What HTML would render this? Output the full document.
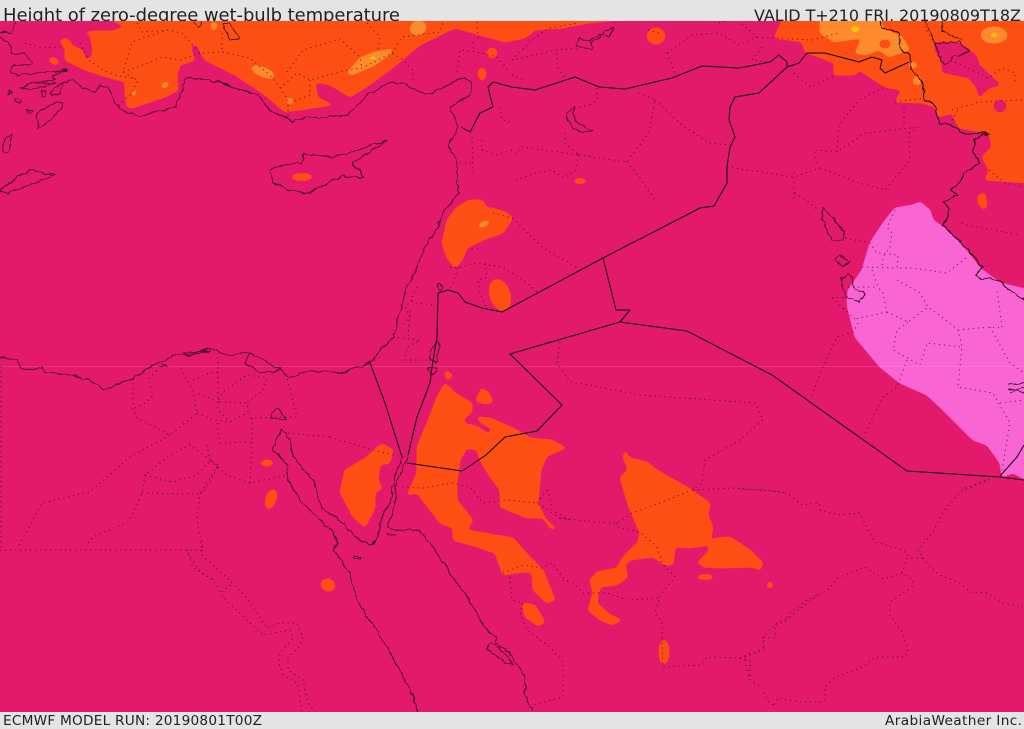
<!DOCTYPE html>
<html><head><meta charset="utf-8"><title>Height of zero-degree wet-bulb temperature</title>
<style>
html,body{margin:0;padding:0;width:1024px;height:729px;overflow:hidden;background:#e4e4e4}
svg{display:block}
text{font-family:"DejaVu Sans","Liberation Sans",sans-serif;fill:#222}
.o{fill:#fd4f14;stroke:#fd4f14;stroke-width:1;stroke-linejoin:round}
.l{fill:#fd8a2c;stroke:#fd8a2c;stroke-width:1;stroke-linejoin:round}
.m{fill:#e31a6c;stroke:#e31a6c;stroke-width:1;stroke-linejoin:round}
.c{fill:none;stroke:#1a0a14;stroke-width:.8;stroke-linejoin:round;stroke-opacity:.9}
.b{fill:none;stroke:#0c0a0c;stroke-width:1;stroke-linejoin:round}
.d{fill:none;stroke:#1c0a16;stroke-width:1;stroke-dasharray:1.2 3.8;stroke-opacity:.7}
</style></head><body>
<svg width="1024" height="729" viewBox="0 0 1024 729" xmlns="http://www.w3.org/2000/svg">
<defs>
<filter id="s" filterUnits="userSpaceOnUse" x="0" y="0" width="1024" height="729" color-interpolation-filters="sRGB">
<feGaussianBlur stdDeviation="1.8" result="b"/>
<feComponentTransfer in="b" result="a"><feFuncA type="linear" slope="6" intercept="-2.5"/></feComponentTransfer>
<feColorMatrix in="a" type="matrix" values="1 0 0 0 0 0 1 0 0 0 0 0 1 0 0 0 0 0 1 0"/>
</filter>
<filter id="w" filterUnits="userSpaceOnUse" x="0" y="0" width="1024" height="729" color-interpolation-filters="sRGB">
<feTurbulence type="fractalNoise" baseFrequency="0.14" numOctaves="2" seed="4" result="n"/>
<feDisplacementMap in="SourceGraphic" in2="n" scale="5" xChannelSelector="R" yChannelSelector="G"/>
</filter>
</defs>
<rect width="1024" height="729" fill="#e4e4e4"/>
<text x="3" y="21" font-size="18" textLength="397" lengthAdjust="spacing">Height of zero-degree wet-bulb temperature</text>
<text x="754" y="21" font-size="16" textLength="267" lengthAdjust="spacing">VALID T+210 FRI, 20190809T18Z</text>
<rect x="0" y="21" width="1024" height="691" fill="#e31a6c"/>
<text x="3" y="725" font-size="13.7" textLength="259" lengthAdjust="spacing">ECMWF MODEL RUN: 20190801T00Z</text>
<text x="885" y="725" font-size="13.7" textLength="137" lengthAdjust="spacing">ArabiaWeather Inc.</text>
<svg x="0" y="21" width="1024" height="691" viewBox="0 21 1024 691">
<g filter="url(#s)">
<path class="o" d="M113 10L113 21L126 27L112 31L92 31L85 34L90 52L86 57L90 58L93 50L89 57L84 53L80 49L72 46L71 42L65 38L60 41L63 46L65 48L65 60L85 70L110 78L125 82L125 95L127 107L133 108L165 97L178 90L177 75L180 65L195 60L193 55L190 46L197 44L200 52L205 60L235 75L265 95L285 112L333 105L318 98L315 82L330 85L350 97L365 88L390 70L420 45L440 35L455 28L480 35L505 42L525 38L535 30L562 28L589 23L612 21L612 10Z"/>
<path class="o" d="M782 10L782 21L774 38L802 42L805 52L834 63L834 75L855 75L859 70L885 87L902 90L895 102L922 103L935 107L939 117L952 113L959 128L989 133L992 147L982 157L989 170L985 180L1030 183L1030 10Z"/>
</g>
<g filter="url(#s)">
<path class="m" d="M84 34L88 33L92 50L90 58L86 58L84 50Z"/>
<path class="m" d="M935 42L960 43L969 50L977 57L979 65L990 75L1000 85L989 88L979 97L977 88L969 78L942 72L942 63L935 50Z"/>
<ellipse class="m" cx="1000" cy="106" rx="6" ry="6"/>
</g>
<g filter="url(#s)">
<path class="l" d="M820 10L820 33L834 42L862 38L855 53L865 55L879 50L889 57L902 52L910 50L902 37L882 28L882 10Z"/>
<ellipse class="l" cx="994" cy="35" rx="13" ry="8"/>
<ellipse class="l" cx="913" cy="65" rx="4" ry="3"/><ellipse class="l" cx="917" cy="81" rx="4" ry="4"/>
<ellipse class="l" cx="418" cy="28" rx="8" ry="7" transform="rotate(-25 418 28)"/>
<path class="l" d="M347 73L360 58L375 52L393 49L390 54L375 65L352 75Z"/>
<ellipse class="l" cx="263" cy="72" rx="12" ry="4.5" transform="rotate(22 263 72)"/>
<ellipse class="l" cx="165" cy="85" rx="4" ry="2.5" transform="rotate(-30 165 85)"/>
<ellipse class="l" cx="134" cy="93" rx="2" ry="3"/><ellipse class="l" cx="290" cy="101" rx="3" ry="3"/><ellipse class="l" cx="214" cy="26" rx="3" ry="4"/>
</g>
<ellipse class="o" cx="885" cy="44" rx="5" ry="4"/>
<ellipse cx="855" cy="29" rx="4" ry="3" fill="#fdc40a"/>
<ellipse cx="994" cy="35" rx="3" ry="2" fill="#fdc40a"/>
<ellipse cx="373" cy="58" rx="3" ry="1.5" fill="#fdc40a"/>
<g filter="url(#s)">
<ellipse class="o" cx="656" cy="36" rx="9" ry="8"/><ellipse class="o" cx="492" cy="53" rx="5" ry="5"/><ellipse class="o" cx="482" cy="74" rx="4" ry="6"/><ellipse class="o" cx="54" cy="61" rx="5" ry="3" transform="rotate(25 54 61)"/>
<ellipse class="o" cx="302" cy="177" rx="10" ry="3.5"/><ellipse class="o" cx="580" cy="181" rx="6" ry="2.5"/>
<path class="o" d="M978 195L985 193L987 205L984 210L978 203Z"/>
<path class="o" d="M470 200L482 200L487 208L493 208L507 213L513 218L503 233L483 240L467 248L462 260L455 268L447 258L442 243L447 220L457 207Z"/>
<ellipse class="o" cx="500" cy="295" rx="10" ry="16" transform="rotate(-18 500 295)"/>
<path class="o" d="M445 383L455 393L472 403L472 412L463 420L466 424L477 426L487 433L493 432L490 428L480 422L477 417L490 418L513 428L530 438L552 440L566 448L547 456L541 470L538 503L545 518L557 530L550 528L543 518L527 518L500 507L500 490L490 477L480 460L477 450L467 448L460 460L457 483L457 500L473 520L467 530L513 538L530 557L543 570L555 600L547 603L533 590L532 573L523 572L503 575L495 553L477 547L453 540L453 528L440 523L417 493L407 495L417 473L417 447L427 423L437 397Z"/>
<path class="o" d="M446 370L453 376L448 380L445 376Z"/><path class="o" d="M482 388L489 393L493 402L485 404L476 401L478 395Z"/>
<path class="o" d="M383 444L393 450L390 463L380 465L378 480L382 488L375 493L375 508L365 527L353 517L340 492L345 470L367 457L377 447Z"/>
<ellipse class="o" cx="267" cy="463" rx="6" ry="3"/><ellipse class="o" cx="271" cy="499" rx="5" ry="10" transform="rotate(18 271 499)"/><ellipse class="o" cx="328" cy="585" rx="7" ry="6" transform="rotate(20 328 585)"/>
<path class="o" d="M522 603L535 605L545 622L538 626L525 617Z"/>
<path class="o" d="M625 451L630 458L647 462L657 470L687 487L710 503L708 515L713 528L710 541L717 538L730 537L750 550L763 563L760 570L752 567L720 568L703 567L698 562L708 552L710 545L690 548L675 547L673 565L665 565L653 557L630 560L625 565L628 577L617 585L600 587L598 596L597 603L610 615L622 620L612 625L600 620L588 610L593 593L590 580L597 572L617 568L623 557L638 542L640 533L628 505L620 477L628 470L623 457Z"/>
<ellipse class="o" cx="705" cy="577" rx="8" ry="2.5"/><ellipse class="o" cx="770" cy="585" rx="3" ry="3"/><ellipse class="o" cx="664" cy="652" rx="5" ry="12"/>
</g>
<ellipse class="l" cx="484" cy="224" rx="5" ry="2" transform="rotate(-25 484 224)"/>
<g filter="url(#s)">
<path d="M920 202L930 210L933 220L947 230L962 245L980 268L1000 283L1030 290L1030 482L1013 473L1002 477L1000 463L987 445L973 440L940 407L927 395L900 383L880 367L855 337L847 305L848 290L862 270L870 243L883 223L895 208L913 205Z" fill="#f966d4" stroke="#f966d4" stroke-linejoin="round"/>
</g>
<rect x="0" y="366" width="1024" height="1" fill="#fff" opacity=".12"/>

<path class="d" d="M25 43L43 48L60 47M80 43L88 60L107 72L118 76L133 78L138 80L132 93L117 107M137 23L142 32L167 30M133 78L123 72L132 42L167 30L182 33L200 53L222 52L250 58L273 78L280 88L288 100L288 117M123 72L143 65L163 57L180 60L200 53M287 72L303 50L340 39L360 57L362 68M280 88L297 73L310 80L347 70L362 68L392 53L403 60L413 70L413 83M310 80L310 95L293 102M392 53L402 37L440 32L443 22M367 23L380 37L378 50M222 33L222 52M457 72L460 50L477 52L497 57L510 72M473 42L473 52M477 22L478 38M472 137L473 157L472 177M460 163L473 163M482 140L482 150L497 155L512 150M500 107L502 120L512 122"/>
<path class="d" d="M512 60L555 50L579 48M557 53L557 67L565 78M512 75L524 80M597 88L597 100L590 105L575 108M565 133L565 143L575 152L579 155L522 147L512 157M579 155L627 162L649 133L655 100L639 93M655 100L682 125L709 143L732 145M627 162L639 177L655 200M579 155L575 170L564 178L552 170L535 173L512 182M727 167L794 177L820 168M794 172L794 200M820 168L859 183L885 190L910 160L909 133L919 127L865 133L837 152L814 150L817 163M837 152L839 125L859 100L885 87M895 102L925 98M904 107L904 127M667 53L675 73M667 53L692 35L719 33L739 45L757 37L739 22M757 37L812 40L839 33M762 47L752 60L770 62M794 73L810 87L834 76M659 33L648 30M512 60L534 38L549 28L579 23M719 23L725 21M925 21L925 28L935 43L942 60M942 21L944 32L962 40M955 62L989 78L1002 68L1015 73L1015 83M952 110L979 102L1024 100M952 120L958 110M989 170L1005 183L1024 187"/>
<path class="d" d="M795 193L810 203L818 210M845 238L870 243L877 253L898 255L897 268L913 268L947 273L967 257M895 210L887 227L892 233L890 247L883 257L882 267M862 267L897 268M872 270L878 287L883 293L887 312L855 319M848 287L878 287M897 280L920 293L928 307L943 318L958 330L962 347L958 387L993 393L1010 423L1002 470M887 312L908 322L928 307M958 330L990 327L1002 328L997 290M990 327L1010 363L1024 373M908 322L897 330L893 350L920 365L927 343L962 347M907 360L897 387L883 397L865 433M858 323L853 332L837 337L823 367L810 400M832 298L848 297M832 298L855 319M1000 403L1024 400M962 223L967 225L1020 235M965 488L993 478"/>
<path class="d" d="M560 342L557 363L570 382L590 385L640 395L755 403L763 420L737 442L705 460L702 483L692 490L660 503L632 513L617 523L593 522L560 518L537 503L507 500L483 503L470 487L453 483L423 488L403 487M537 503L548 488L552 510L570 520L560 518M617 523L617 527L640 532L657 547L662 563L675 577L660 595L655 613L662 622L662 640L663 667L700 665L707 657L740 658L763 648L763 637L777 623L790 617L820 593M693 490L733 488L767 490L787 493M658 598L627 600L607 593L583 593L573 583L560 580M740 658L750 660L750 680"/>
<path class="d" d="M740 489L773 491L787 493L802 505L819 503L820 510L840 515L860 513L868 530L875 542L903 550L910 558L923 558L918 550L933 532L943 512L960 492L988 480M923 558L930 567L940 575L960 583L970 592L987 593L1002 603L1023 607M907 558L902 573L913 580L912 587L890 602L890 615L903 633L908 652L905 657L875 657L863 667L835 677L825 687L825 700L820 702L800 702L778 698L772 708M902 573L883 579L865 567L838 578L828 590L807 600L790 613L785 622L775 625L775 638L763 637L765 650L740 658M745 660L750 680L762 687L767 700L773 705"/>
<path class="d" d="M133 378L133 410L137 418L170 435L197 413L193 390L180 368M135 408L147 402L153 395L148 380L157 370M170 435L130 457L90 492L42 503L18 547M0 550L200 550L202 552M1 366L1 550M193 380L210 373L218 372L218 353M218 372L218 402L197 393M197 413L213 420L230 422L248 412L247 403L263 390L267 378L247 375L237 382L223 392L218 402L247 403M218 402L218 410L230 422M250 418L297 417L287 378L287 372M252 418L252 442L220 443L217 423M252 442L250 483L288 475M250 483L227 475L210 460L218 465M207 445L210 460L190 445L170 455L145 475L172 482L197 475L210 460M145 475L142 493L133 513L128 522L93 537L87 545M142 493L200 494L218 465L210 483L200 494L197 517L202 550M187 550L193 567L213 580M202 540L202 555L227 578L247 598L267 628L280 623L297 623L303 637L298 648L288 658L288 670L303 680L308 703L315 712M188 553L200 572L213 580L223 597L247 620L263 635L290 630L293 638L280 653L279 663L283 675L297 683L300 697L302 712M222 592L233 583"/>
<path class="d" d="M510 577L512 600L523 603L520 613L527 630L550 647L563 662L563 697L533 705M503 573L523 565L542 568L552 563L565 580L570 582M330 437L373 450L402 457M288 433L330 437M450 267L458 268L473 263L503 267L530 285L537 292M485 263L487 277L478 280L480 293L485 305L487 308M458 268L453 283L448 290M472 248L472 253M478 248L478 253M493 213L512 218L543 248L578 268M417 287L412 297L412 302L433 305M412 300L405 307L410 317L400 327M393 337L403 338L420 340L407 347L405 360L430 360M410 310L408 337M370 363L383 355"/>

<g filter="url(#w)">
<path class="c" d="M0 37L8 42L12 53L23 53L32 62L28 65L13 65L12 73L17 75L68 70L53 75L55 80L32 83L20 88L38 88L55 83L32 83M0 192L10 182L30 170L55 175L30 185L8 193Z"/>
<path class="c" d="M62 102L50 105L37 113L38 128L50 120L62 108Z"/>
<path class="c" d="M3 143L12 133L10 145L8 153L3 152Z M42 90L46 92L46 96L41 96Z M50 92L63 83L60 92L52 95Z M8 91L12 93L9 95Z M15 99L22 101L20 104L15 102Z M26 110L33 110L33 112L27 113Z M0 33L12 33L13 27L17 23"/>
<path class="c" d="M63 82L73 80L83 88L95 92L100 85L108 88L117 107L127 113L140 117L160 110L175 108L178 100L183 90L183 80L190 78L210 80L233 87L257 95L270 110L293 122L300 118L320 117L347 115L355 108L367 95L390 82L403 83L427 95L443 88L462 77L472 83L470 95L450 107L458 127"/>
<path class="c" d="M458 127L448 145L457 163L458 193L452 200L443 213L435 232L425 247L415 272L407 287L400 310L393 337L370 363L340 373L330 372L315 371L300 373L290 377L280 370L268 363L250 352L245 363L260 373L270 372L280 370M250 352L227 355L210 348L187 355L173 354L172 357L157 363L133 378L110 388L103 388L90 380L67 375L45 373L43 367L32 370L20 367L17 360L0 357"/>
<path class="c" d="M183 353L210 350L190 356ZM160 364L168 366L158 367"/>
<path class="c" d="M270 170L283 165L302 163L304 154L333 157L353 152L388 140L367 153L353 163L363 177L350 177L343 176L308 193L287 190L273 182Z"/>
<path class="c" d="M290 440L293 457L313 480L318 497L322 508L338 520L360 540L370 545L378 537L380 520L390 503L395 477L403 457M408 457L397 480L395 507L388 527L392 530L420 530L433 547L450 573L463 590L488 632L497 637L495 643L510 653L525 677L525 695L533 710M290 440L283 430L275 440L273 450L287 465L288 480L300 500L313 513L333 532L337 543L333 550L350 573L357 600L387 647L407 683L417 707L418 712"/>
<path class="c" d="M272 412L278 408L283 417L286 420L280 418L272 418Z M388 533L396 535L390 536Z M355 556L360 558L359 560L355 558Z"/>
<path class="c" d="M488 645L492 643L507 655L513 665L505 663L490 650L487 650Z"/>
<path class="c" d="M222 23L228 23L240 38L230 41L227 32ZM193 22L198 28L202 22M935 43L959 42L969 52L952 57L945 65L939 57ZM925 21L935 43M942 21L942 30L950 35L962 40"/>
<path class="c" d="M614 27L609 37L599 33L601 38L590 43L592 50L575 45L580 38L590 41L600 35ZM574 107L565 115L572 127L580 133L592 130L585 127L574 120Z"/>
<path class="c" d="M823 208L828 213L845 232L843 240L832 240L822 220ZM840 255L835 260L843 267L850 262ZM847 272L842 278L842 287L847 297L860 302L865 293L855 288L852 277Z"/>
<path class="c" d="M1008 385L1024 383M1008 388L1024 393M1010 392L1024 388"/>
<path class="c" d="M439 283L437 287L440 292L443 287ZM437 340L432 350L430 360L436 363L439 342ZM428 368L432 375L437 372L437 368Z"/>
<path class="b" d="M880 21L882 28L899 33L900 47L910 55L910 70L917 75L924 88L925 100L935 105L939 123L957 128L960 133L989 133L974 140L974 153L980 163L965 173L960 182L952 190L957 195L943 203L950 210L943 225L960 243L970 252L982 268L975 275L980 278L997 280L1024 300"/>
</g>
<path class="b" d="M461 127L470 132L480 113L493 107L488 87L493 82L512 87L535 90L575 77L599 87L625 89L672 78L702 66L739 68L770 62L779 55L787 62L787 67L799 63L807 53L825 53L859 62L872 57L882 60L880 68L885 73L909 62"/>
<path class="b" d="M438 293L448 290L458 293L465 302L482 308L502 312L603 258L700 208L714 206L727 183L727 167L730 147L735 137L729 120L730 107L735 97L759 93L787 67"/>
<path class="b" d="M603 258L616 310L630 310L620 322L510 354L562 405L537 431L505 437L486 455L462 471L407 463M620 322L687 331L772 375L907 471L1000 477L1024 480M1000 476L1017 457L1024 445"/>
<path class="b" d="M370 363L385 403L402 457M438 293L437 337L432 367L430 383L417 417L408 455"/>
</svg>
</svg>
</body></html>
